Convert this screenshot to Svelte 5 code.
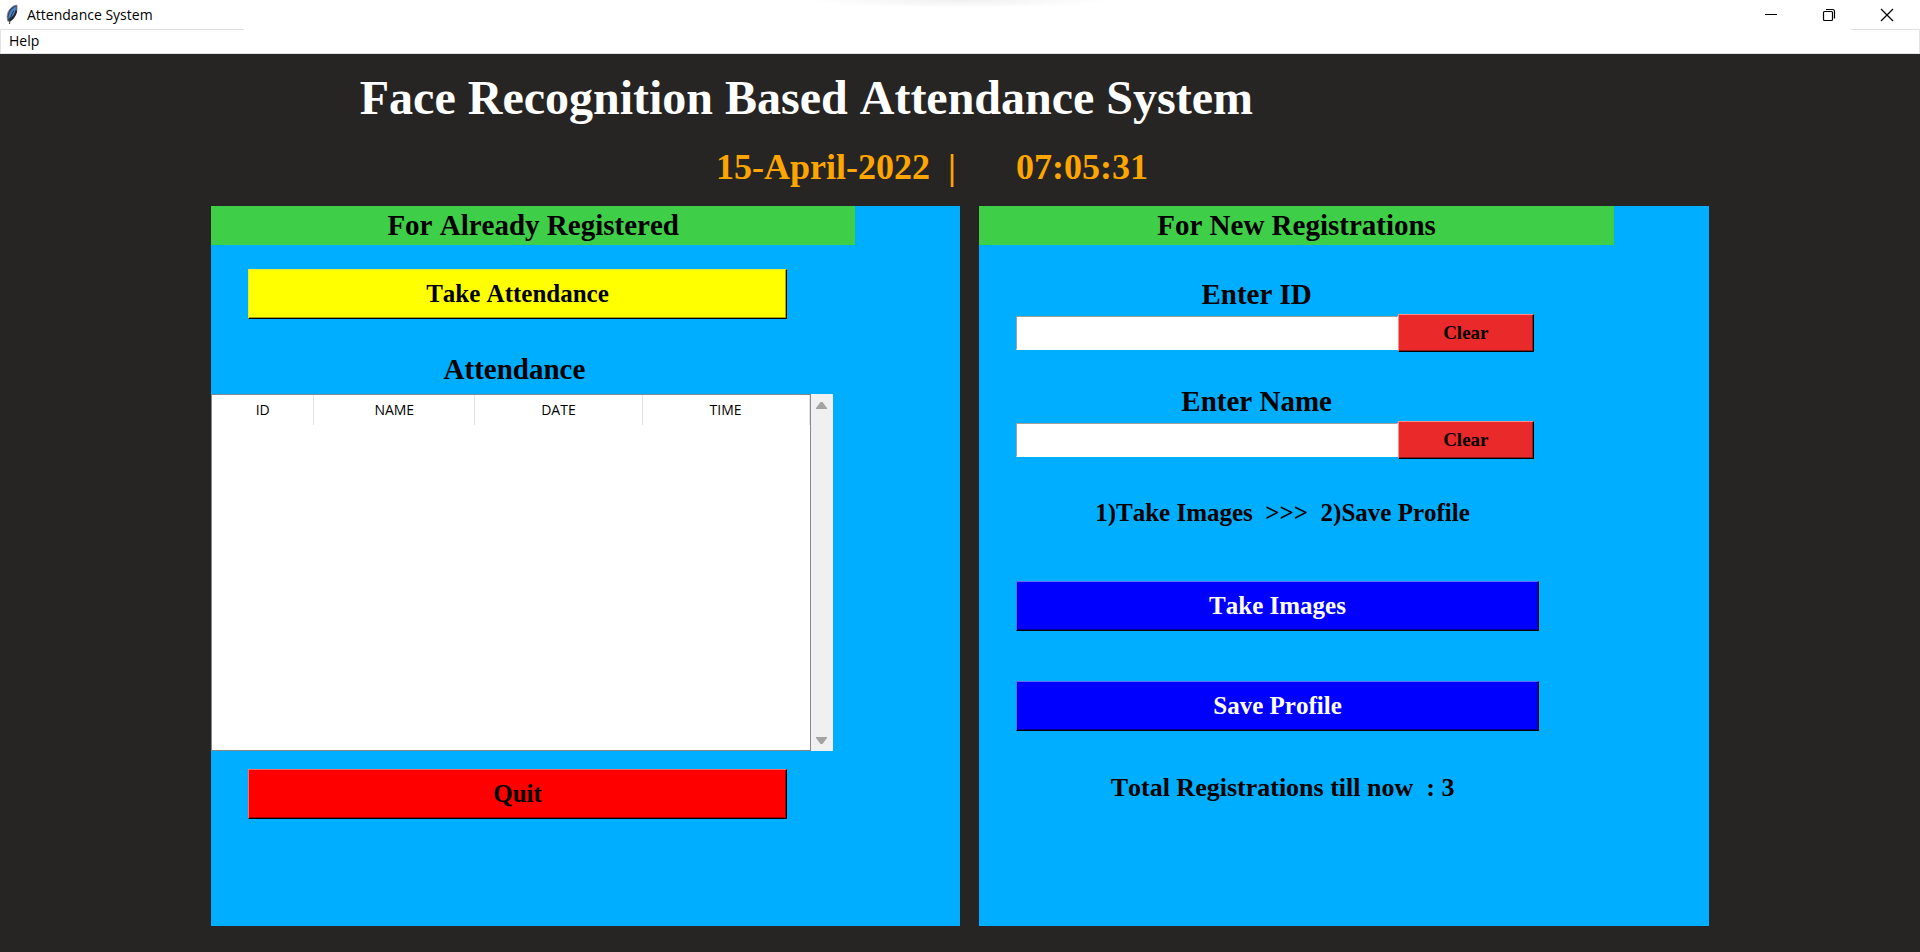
<script>
  let id = $state('');
  let name = $state('');
  const columns = ['ID', 'NAME', 'DATE', 'TIME'];
  const registrations = 3;
</script>

<div class="window">
  <div class="titlebar">
    <svg class="feather" width="14" height="22" viewBox="0 0 14 22" aria-hidden="true">
      <path d="M12 1C7 1.500 2.500 6 2 12.500L2.500 17L4.500 17.500L8 15C11 11 12.500 7 12 1Z" fill="#34465f" stroke="#8b939c" stroke-width="0.800" />
      <path d="M10.800 2.500C7 4.500 3.500 8.500 3.500 14.500L7.500 12C10 9 11.500 6 10.800 2.500Z" fill="#4f86cc" />
      <path d="M11.500 6.500C10.500 11 8.500 14 5 16.500" fill="none" stroke="#1f242c" stroke-width="1.600" />
      <path d="M9 6.500C6.500 10 5 14 4.500 20" fill="none" stroke="#1f242c" stroke-width="0.900" />
    </svg>
    <span class="caption">Attendance System</span>
    <div class="controls">
      <button aria-label="Minimize">
        <svg width="14" height="14" viewBox="0 0 14 14"><path d="M1 6.500H13" stroke="#000" fill="none" /></svg>
      </button>
      <button aria-label="Restore">
        <svg width="14" height="14" viewBox="0 0 14 14" fill="none" stroke="#000">
          <rect x="1.500" y="3.500" width="9" height="9" rx="1" stroke-width="1.200" />
          <path d="M4 1.500H10.500Q12.500 1.500 12.500 3.500V10.500" stroke-width="1.200" />
        </svg>
      </button>
      <button aria-label="Close">
        <svg width="14" height="14" viewBox="0 0 14 14"><path d="M1 1L13 13M13 1L1 13" stroke="#000" stroke-width="1.200" fill="none" /></svg>
      </button>
    </div>
    <div class="shade"></div>
  </div>
  <nav class="menubar"><button>Help</button></nav>

  <main>
    <h1>Face Recognition Based Attendance System</h1>
    <div class="clock">
      <span class="date">15-April-2022&nbsp; |</span>
      <span>07:05:31</span>
    </div>

    <div class="panels">
      <section class="panel left">
        <h2>For Already Registered</h2>
        <div class="inset first"><button class="tk yellow">Take Attendance</button></div>
        <div class="records">
          <h3>Attendance</h3>
          <div class="view">
            <div class="sheet">
              <table>
                <colgroup><col class="c1" /><col class="c2" /><col class="c3" /><col class="c4" /></colgroup>
                <thead>
                  <tr>{#each columns as column}<th scope="col">{column}</th>{/each}</tr>
                </thead>
              </table>
            </div>
            <div class="scroll">
              <button aria-label="Scroll up"><svg width="11" height="9" viewBox="0 0 11 9"><path d="M0 8V7L4.500 1H6.500L11 7V8Z" fill="#a3a3a3" /></svg></button>
              <button aria-label="Scroll down"><svg width="11" height="9" viewBox="0 0 11 9"><path d="M0 1V2L4.500 8H6.500L11 2V1Z" fill="#a3a3a3" /></svg></button>
            </div>
          </div>
        </div>
        <div class="inset"><button class="tk red">Quit</button></div>
      </section>

      <section class="panel right">
        <h2>For New Registrations</h2>
        <div class="inset">
          <div class="form">
            <div class="field">
              <label for="id">Enter ID</label>
              <div class="entry">
                <input id="id" type="text" bind:value={id} />
                <button class="tk clear" onclick={() => (id = '')}>Clear</button>
              </div>
            </div>
            <div class="field">
              <label for="name">Enter Name</label>
              <div class="entry">
                <input id="name" type="text" bind:value={name} />
                <button class="tk clear" onclick={() => (name = '')}>Clear</button>
              </div>
            </div>
            <p class="steps">1)Take Images&nbsp; &gt;&gt;&gt;&nbsp; 2)Save Profile</p>
            <div class="actions">
              <button class="tk blue">Take Images</button>
              <button class="tk blue">Save Profile</button>
            </div>
            <p class="total">Total Registrations till now&nbsp; : {registrations}</p>
          </div>
        </div>
      </section>
    </div>
  </main>
</div>

<style>
  :global(body) { background: #262523; }
  * { box-sizing: border-box; }
  button { font: inherit; color: inherit; background: none; border: 0; padding: 0; }
  h1, h2, h3, p { margin: 0; font-weight: bold; }
  svg { display: block; }

  .window {
    min-height: 100vh;
    display: flex;
    flex-direction: column;
    background: #262523;
    font-family: "Liberation Serif", "Times New Roman", serif;
    font-kerning: none;
  }
  .titlebar, .menubar, table { font-family: "Open Sans", "Segoe UI", sans-serif; color: #000; }

  .titlebar {
    position: relative;
    display: flex;
    align-items: center;
    height: 29px;
    padding: 0 4px 0 5px;
    background: #fff;
    font-size: 14px;
  }
  .caption { margin-left: 8px; }
  .controls { display: flex; height: 28px; margin-left: auto; }
  .controls button { width: 58px; display: grid; place-items: center; }
  .shade {
    position: absolute;
    top: 0;
    left: 42%;
    width: 16%;
    height: 8px;
    background: radial-gradient(ellipse at top, #f0f0f0, #fff 70%);
  }

  .menubar {
    height: 25px;
    padding: 0 8px;
    border-left: 1px solid #e3e3e3;
    border-right: 1px solid #e3e3e3;
    border-bottom: 1px solid #e3e3e3;
    background: linear-gradient(90deg, #e0e0e0 0 243px, #fff 243px calc(100% - 68px), #e0e0e0 calc(100% - 68px)) top / 100% 1px no-repeat #fff;
    font-size: 14px;
  }
  .menubar button { display: block; line-height: 24px; }

  main { flex: 1; display: flex; flex-direction: column; padding: 16px 0 26px; }
  h1 {
    width: 84%;
    color: #fff;
    font-size: 48px;
    line-height: 56px;
    text-align: center;
  }
  .clock {
    display: grid;
    grid-template-columns: 716fr 300fr 904fr;
    margin: 20px 0 18px;
    color: #ffa500;
    font-size: 36px;
    font-weight: bold;
    line-height: 42px;
    white-space: nowrap;
  }
  .date { grid-column: 2; }

  .panels { flex: 1; display: grid; grid-template-columns: 39fr 1fr 38fr; padding: 0 11%; }
  .panel { background: #00aeff; color: #000; }
  .right { grid-column: 3; }
  h2 {
    background: #3ece48;
    font-size: 29px;
    line-height: 39px;
    text-align: center;
  }
  .left h2 { width: 86%; }
  .right h2 { width: 87%; }
  .inset { display: grid; }
  .left .inset { grid-template-columns: 37fr 538fr 173fr; }
  .right .inset { grid-template-columns: 37fr 523fr 170fr; }
  .inset > * { grid-column: 2; }
  .first { margin: 24px 0 33px; }

  .tk {
    height: 50px;
    border: 1px solid;
    font-size: 25px;
    font-weight: bold;
    line-height: 30px;
  }
  .yellow { background: #ff0; border-color: #e8e83c #000 #000 #e8e83c; box-shadow: inset -1px -1px #a6a600; }
  .red { background: #f00; border-color: #ff6b6b #000 #000 #ff6b6b; box-shadow: inset -1px -1px #a00000; }
  .blue { background: #00f; color: #fff; border-color: #5b6cff #000 #000 #5b6cff; box-shadow: inset -1px -1px #00008c; }
  .clear {
    flex: 137;
    height: 38px;
    background: #ea2a2a;
    border-color: #ff8f8f #000 #000 #ff8f8f;
    box-shadow: inset -1px -1px #8f1a1a;
    font-size: 19px;
    line-height: 24px;
  }

  .records { width: 83%; margin-bottom: 18px; }
  h3 {
    margin-bottom: 8px;
    padding-right: 15px;
    font-size: 29px;
    line-height: 34px;
    text-align: center;
  }
  .view { display: flex; height: 357px; }
  .sheet { flex: 1; background: #fff; border: 1px solid #828790; }
  table { width: 100%; table-layout: fixed; border-collapse: collapse; font-size: 14px; }
  .c1 { width: 17%; }
  .c2 { width: 27%; }
  .c3 { width: 28%; }
  .c4 { width: 28%; }
  th { height: 30px; padding: 0 0 2px; border-right: 1px solid #e3e3e3; font-weight: normal; }
  .scroll {
    width: 22px;
    display: flex;
    flex-direction: column;
    justify-content: space-between;
    background: #f0f0f0;
  }
  .scroll button { height: 22px; display: grid; place-items: center; }

  .form { display: flex; flex-direction: column; padding-top: 32px; }
  .field { margin-bottom: 32px; }
  .field label {
    display: block;
    width: 92%;
    margin-bottom: 3px;
    font-size: 29px;
    font-weight: bold;
    line-height: 34px;
    text-align: center;
  }
  .entry { display: flex; align-items: center; width: 99%; }
  input {
    flex: 381;
    min-width: 0;
    height: 34px;
    padding: 0 4px;
    border: 1px solid;
    border-color: #a0a0a0 #fff #fff #a0a0a0;
    background: #fff;
    font-family: inherit;
    font-size: 25px;
    font-weight: bold;
  }
  .steps, .total { padding-left: 10px; line-height: 30px; text-align: center; white-space: nowrap; }
  .steps { margin-top: 7px; font-size: 25px; }
  .actions { display: grid; gap: 50px; margin: 53px 0 42px; }
  .total { font-size: 26px; }
</style>
